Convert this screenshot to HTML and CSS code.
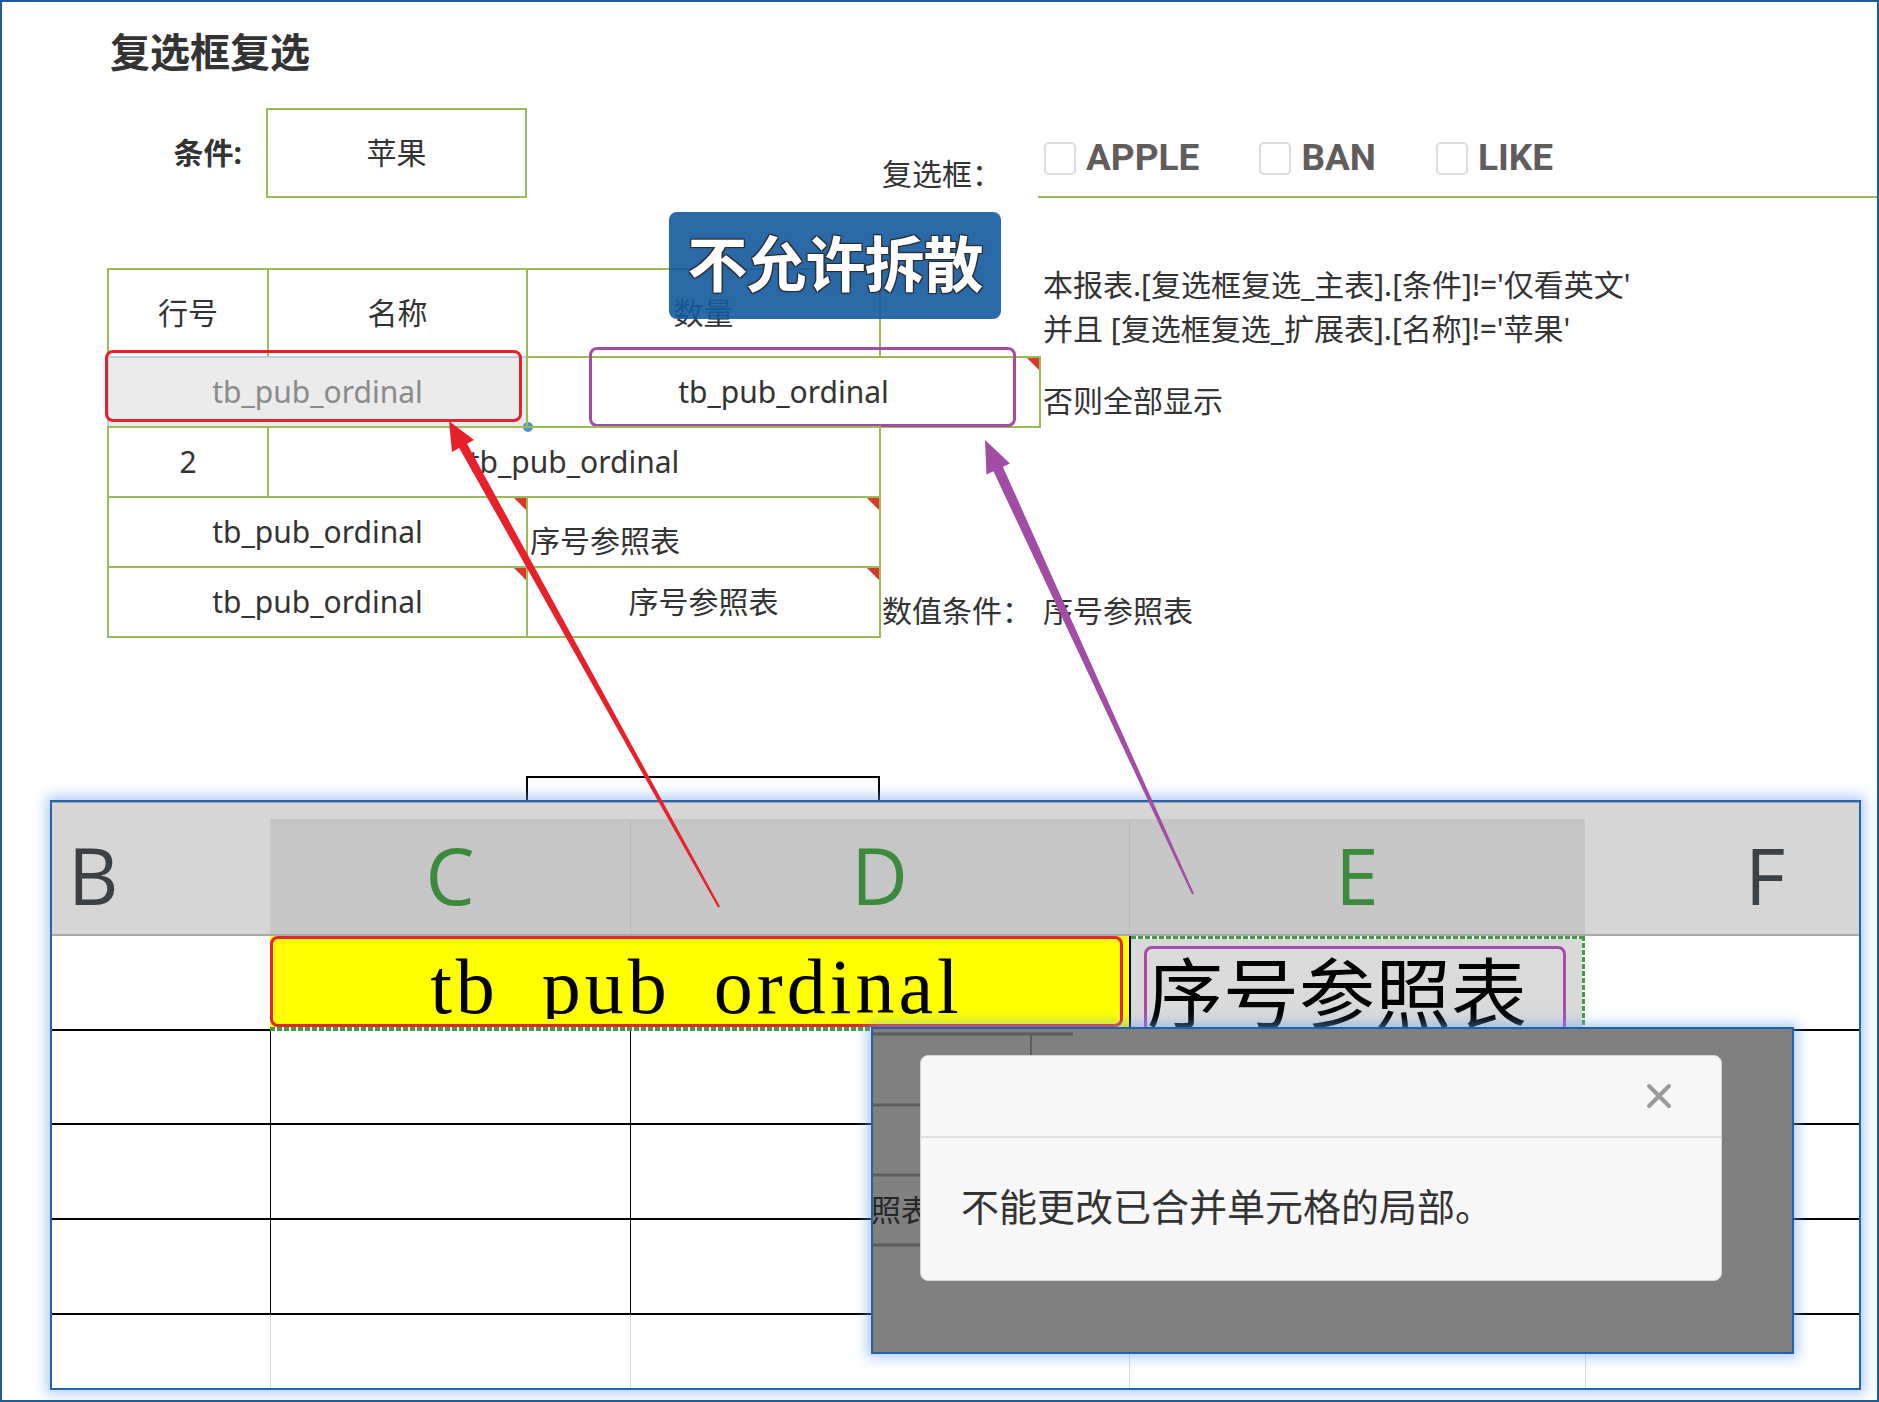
FILE: index.html
```html
<!DOCTYPE html>
<html lang="zh-CN">
<head>
    <meta charset="UTF-8">
    <title>复选框复选</title>
    <link rel="stylesheet" href="styles.css">
</head>
<body>

<div class="page">
    <!-- report designer sheet -->
    <div class="sheet">
        <h1 class="title">复选框复选</h1>

        <div class="cond-label">条件:</div>
        <div class="cond-box">苹果</div>

        <div class="check-label">复选框：</div>
        <div class="check-group">
            <label class="check"><span class="box"></span>APPLE</label>
            <label class="check"><span class="box"></span>BAN</label>
            <label class="check"><span class="box"></span>LIKE</label>
        </div>

        <div class="notes">
            <p>本报表.[复选框复选_主表].[条件]!='仅看英文'</p>
            <p>并且 [复选框复选_扩展表].[名称]!='苹果'</p>
            <p class="gap">否则全部显示</p>
        </div>

        <!-- header row -->
        <div class="cell r-head c-no">行号</div>
        <div class="cell r-head c-name">名称</div>
        <div class="cell r-head c-qty">数量</div>

        <!-- row 1 -->
        <div class="cell r-1 c-no-name muted">
            tb_pub_ordinal
            <span class="ring-red"></span>
            <span class="handle"></span>
        </div>
        <div class="cell r-1 c-qty-ext flag">
            tb_pub_ordinal
            <span class="ring-lilac"></span>
        </div>

        <!-- row 2 -->
        <div class="cell r-2 c-no">2</div>
        <div class="cell r-2 c-name-qty">tb_pub_ordinal</div>

        <!-- row 3 -->
        <div class="cell r-3 c-no-name flag">tb_pub_ordinal</div>
        <div class="cell r-3 c-qty flag low">序号参照表</div>

        <!-- row 4 -->
        <div class="cell r-4 c-no-name flag">tb_pub_ordinal</div>
        <div class="cell r-4 c-qty flag">序号参照表</div>

        <div class="num-label">数值条件：</div>
        <div class="num-value">序号参照表</div>

        <div class="next-band"></div>
    </div>

    <div class="lock-badge">不允许拆散</div>

    <!-- spreadsheet preview -->
    <div class="grid-view">
        <div class="col-head col-b">B</div>
        <div class="col-head in-range">C</div>
        <div class="col-head in-range">D</div>
        <div class="col-head in-range">E</div>
        <div class="col-head col-f">F</div>

        <div class="gc ruled"></div>
        <div class="gc pick-cd">
            <div class="pick-ring"><div class="ordinal">tb_pub_ordinal</div></div>
        </div>
        <div class="gc pick-e">
            <div class="pick-lilac">序号参照表</div>
        </div>
        <div class="gc ruled"></div>

        <div class="gc ruled"></div>
        <div class="gc ruled lined"></div>
        <div class="gc ruled lined"></div>
        <div class="gc ruled lined"></div>
        <div class="gc ruled lined"></div>

        <div class="gc ruled"></div>
        <div class="gc ruled lined"></div>
        <div class="gc ruled lined"></div>
        <div class="gc ruled lined"></div>
        <div class="gc ruled lined"></div>

        <div class="gc ruled"></div>
        <div class="gc ruled lined"></div>
        <div class="gc ruled lined"></div>
        <div class="gc ruled lined"></div>
        <div class="gc ruled lined"></div>

        <div class="gc"></div>
        <div class="gc faint"></div>
        <div class="gc faint"></div>
        <div class="gc faint"></div>
        <div class="gc faint"></div>
    </div>

    <!-- pointers from the designer cells to the preview -->
    <svg class="arrows" viewBox="0 0 1879 1402">
        <polygon fill="#e8202a" points="449,421 452,452 474,440"/>
        <polygon fill="#e8202a" points="457,444 465,440 720,906.5 718,907.5"/>
        <polygon fill="#a34ca6" points="985,440 986.5,474.5 1010,463.5"/>
        <polygon fill="#a34ca6" points="991,466 1000.5,461.5 1194,893.6 1192,894.4"/>
    </svg>

    <!-- merge warning -->
    <div class="mask">
        <svg class="mask-under" width="200" height="330">
            <g stroke="#5d5d5d" fill="none">
                <line x1="0" y1="5" x2="320" y2="5" stroke-width="3"/>
                <line x1="158" y1="5" x2="158" y2="28" stroke-width="2"/>
                <line x1="0" y1="76" x2="50" y2="76" stroke-width="3"/>
                <line x1="0" y1="146" x2="50" y2="146" stroke-width="3"/>
                <line x1="0" y1="216" x2="50" y2="216" stroke-width="3"/>
            </g>
            <text x="-2" y="192" font-size="30" fill="#262626">照表</text>
        </svg>
        <div class="modal">
            <div class="modal-head">
                <svg class="close" width="26" height="26" viewBox="0 0 26 26">
                    <path d="M3 3 L23 23 M23 3 L3 23" stroke="#9a9a9a" stroke-width="4" stroke-linecap="round"/>
                </svg>
            </div>
            <div class="modal-body">不能更改已合并单元格的局部。</div>
        </div>
    </div>
</div>

</body>
</html>
```

FILE: styles.css
```css
* {
    box-sizing: border-box;
}

body {
    margin: 0;
    background: #fff;
    font-family: "Noto Sans", "Noto Sans CJK SC", sans-serif;
    color: #333;
}

.page {
    position: relative;
    width: 1879px;
    height: 1402px;
    border: 2px solid #1f5a9a;
    overflow: hidden;
    background: #fff;
}

/* designer grid: gutter, 行号, 名称, 数量, extra column, free area */
.sheet {
    display: grid;
    grid-template-columns: 105px 160px 259px 353px 160px 1fr;
    grid-template-rows: 106px 90px 70px 88px repeat(4, 70px) 140px 30px;
    font-size: 30px;
    line-height: 40px;
}

.title {
    grid-column: 2 / 6;
    grid-row: 1;
    margin: 0;
    padding: 22px 0 0 3px;
    font-size: 40px;
    line-height: 56px;
    font-weight: 700;
    color: #333;
}

.cond-label {
    grid-column: 2;
    grid-row: 2;
    display: flex;
    align-items: center;
    justify-content: flex-end;
    padding-right: 25px;
    font-weight: 700;
}

.cond-box {
    grid-column: 3;
    grid-row: 2;
    margin: 0 -1px;
    border: 2px solid #9bbb59;
    display: flex;
    align-items: center;
    justify-content: center;
}

.check-label {
    grid-column: 5;
    grid-row: 2;
    align-self: end;
    padding: 0 0 4px 3px;
}

.check-group {
    grid-column: 6;
    grid-row: 2;
    margin-left: -1px;
    display: flex;
    align-items: center;
    padding: 12px 0 0 6px;
    border-bottom: 2px solid #9bbb59;
}

.check {
    display: flex;
    align-items: center;
    gap: 10px;
    margin-right: 60px;
    font-family: Roboto, "Liberation Sans", sans-serif;
    font-weight: 700;
    font-size: 37px;
    color: #615d5d;
}

.check .box {
    width: 32px;
    height: 33px;
    border: 2px solid #dcdcdc;
    border-radius: 5px;
    background: #fff;
}

.notes {
    grid-column: 6;
    grid-row: 3 / 6;
    padding: 65px 0 0 4px;
    line-height: 44px;
    white-space: nowrap;
}

.notes p {
    margin: 0;
}

.notes .gap {
    margin-top: 28px;
}

/* table cells */
.cell {
    position: relative;
    display: flex;
    align-items: center;
    justify-content: center;
    margin: 0 -2px -2px 0;
    border: 2px solid #9bbb59;
    white-space: nowrap;
}

.r-head { grid-row: 4; }
.r-1 { grid-row: 5; }
.r-2 { grid-row: 6; }
.r-3 { grid-row: 7; }
.r-4 { grid-row: 8; }

.c-no { grid-column: 2; }
.c-name { grid-column: 3; }
.c-qty { grid-column: 4; }
.c-no-name { grid-column: 2 / 4; }
.c-name-qty { grid-column: 3 / 5; }
.c-qty-ext { grid-column: 4 / 6; }

.cell.muted {
    background: #ebebeb;
    border-color: #b9cfe4;
    color: #8a8a8a;
}

.cell.low {
    justify-content: flex-start;
    align-items: flex-end;
    padding: 0 0 5px 2px;
}

.flag::after {
    content: "";
    position: absolute;
    top: 0;
    right: 0;
    border-top: 12px solid #d8392b;
    border-left: 12px solid transparent;
}

.ring-red {
    position: absolute;
    left: -4px;
    top: -8px;
    width: 417px;
    height: 72px;
    border: 3px solid #e5212a;
    border-radius: 8px;
}

.ring-lilac {
    position: absolute;
    left: 61px;
    top: -11px;
    width: 427px;
    height: 80px;
    border: 3px solid #a34ca6;
    border-radius: 8px;
}

.handle {
    position: absolute;
    left: 414px;
    top: 64px;
    width: 10px;
    height: 10px;
    border-radius: 50%;
    background: #4b90cf;
}

.num-label {
    grid-column: 5;
    grid-row: 8;
    align-self: end;
    padding: 0 0 5px 3px;
    white-space: nowrap;
}

.num-value {
    grid-column: 6;
    grid-row: 8;
    align-self: end;
    padding: 0 0 5px 4px;
}

.next-band {
    grid-column: 4;
    grid-row: 10;
    margin-right: -1px;
    border: 2px solid #000;
    border-bottom: 0;
}

.lock-badge {
    position: absolute;
    z-index: 2;
    left: 667px;
    top: 210px;
    width: 332px;
    height: 107px;
    display: flex;
    align-items: center;
    justify-content: center;
    padding-bottom: 4px;
    border-radius: 8px;
    background: rgba(20, 90, 160, 0.9);
    color: #fff;
    font-size: 60px;
    line-height: 1;
    font-weight: 700;
    letter-spacing: -1px;
    text-shadow: 1px 1px 0 #2b2b2b, -1px -1px 0 #2b2b2b, 1px -1px 0 #2b2b2b, -1px 1px 0 #2b2b2b, 0 0 3px #222;
}

/* spreadsheet preview */
.grid-view {
    position: absolute;
    z-index: 3;
    left: 48px;
    top: 798px;
    width: 1811px;
    height: 590px;
    display: grid;
    grid-template-columns: 218px 360px 499px 456px 1fr;
    grid-template-rows: 134px 95px 94px 95px 95px 1fr;
    border: 2px solid #2264ad;
    background: #fff;
    box-shadow: 0 0 12px 4px rgba(110, 165, 245, 0.55);
}

.col-head {
    position: relative;
    display: flex;
    align-items: center;
    justify-content: center;
    padding-top: 13px;
    border-top: 1px solid #a3a3a3;
    border-bottom: 2px solid #a8a8a8;
    background: #d6d6d6;
    font-family: "Open Sans", sans-serif;
    font-size: 78px;
    line-height: 1;
    color: #3b4145;
}

.col-head.in-range {
    background: linear-gradient(#d6d6d6 16px, #c6c6c6 16px);
    color: #3c8a3c;
}

.col-head.in-range + .in-range::before {
    content: "";
    position: absolute;
    left: 0;
    top: 16px;
    bottom: 0;
    border-left: 1px solid #b9b9b9;
}

.col-head.col-b {
    justify-content: flex-start;
    padding-left: 16px;
}

.col-head.col-f {
    justify-content: flex-start;
    padding-left: 160px;
}

.gc {
    position: relative;
}

.gc.ruled {
    border-bottom: 2px solid #000;
}

.gc.lined {
    border-left: 1px solid #000;
}

.gc.faint {
    border-left: 1px solid #d9d9d9;
}

.pick-cd {
    grid-column: span 2;
    background: #ff0;
}

.pick-cd::after {
    content: "";
    position: absolute;
    left: 0;
    right: 0;
    bottom: 0;
    height: 4px;
    background: repeating-linear-gradient(90deg, #3f9f3f 0 5px, #fff 5px 7px);
}

.pick-ring {
    width: 853px;
    height: 91px;
    border: 3px solid #e3242b;
    border-radius: 8px;
    background: #ff0;
}

.ordinal {
    height: 80px;
    overflow: hidden;
    padding-top: 9px;
    text-align: center;
    font-family: "Liberation Serif", serif;
    font-size: 78px;
    line-height: 78px;
    letter-spacing: 4px;
    color: #000;
}

.pick-e {
    overflow: hidden;
    border-left: 2px solid #000;
    background: #d9d9d9;
}

.pick-e::before,
.pick-e::after {
    content: "";
    position: absolute;
    z-index: 1;
}

.pick-e::before {
    left: 0;
    right: 0;
    top: 0;
    height: 3px;
    background: repeating-linear-gradient(90deg, #3f9f3f 0 5px, #fff 5px 7px);
}

.pick-e::after {
    top: 0;
    bottom: 0;
    right: 0;
    width: 3px;
    background: repeating-linear-gradient(180deg, #3f9f3f 0 5px, #fff 5px 7px);
}

.pick-lilac {
    position: absolute;
    left: 13px;
    top: 10px;
    width: 422px;
    height: 100px;
    padding: 2px 0 0 0;
    border: 3px solid #a54dae;
    border-radius: 8px;
    background: #dadada;
    font-family: "Noto Sans CJK SC", sans-serif;
    font-size: 76px;
    line-height: 1;
    color: #000;
    white-space: nowrap;
}

.arrows {
    position: absolute;
    z-index: 4;
    left: -2px;
    top: -2px;
    width: 1879px;
    height: 1402px;
    pointer-events: none;
}

/* dimmed dialog layer */
.mask {
    position: absolute;
    z-index: 5;
    left: 869px;
    top: 1025px;
    width: 923px;
    height: 327px;
    padding: 26px 0 0 47px;
    border: 2px solid #2162ab;
    background: #808080;
    box-shadow: 0 0 12px 4px rgba(110, 165, 245, 0.55);
}

.mask-under {
    position: absolute;
    left: 0;
    top: 0;
    font-family: "Noto Sans CJK SC", sans-serif;
}

.modal {
    position: relative;
    width: 802px;
    height: 226px;
    display: flex;
    flex-direction: column;
    border: 1px solid #d4d4d4;
    border-radius: 8px;
    background: #f7f7f7;
}

.modal-head {
    height: 82px;
    display: flex;
    align-items: center;
    justify-content: flex-end;
    padding-right: 49px;
    border-bottom: 2px solid #e0e0e0;
}

.modal-body {
    flex: 1;
    display: flex;
    align-items: center;
    padding: 0 0 10px 40px;
    font-size: 38px;
    color: #333;
}
```
